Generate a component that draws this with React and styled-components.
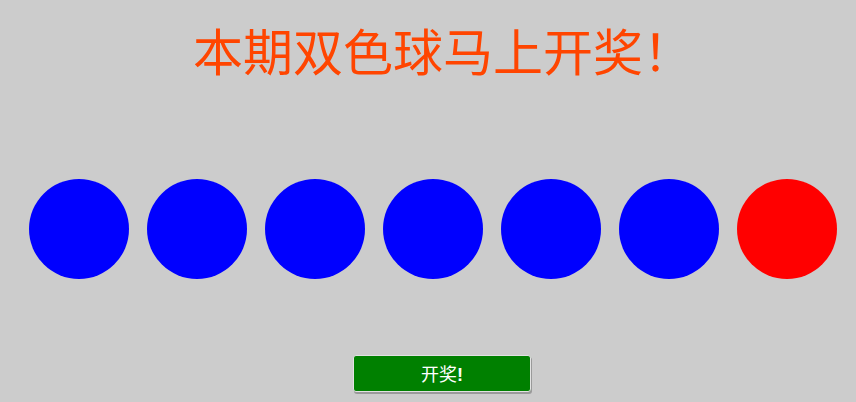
import React from "react";
import styled, { createGlobalStyle } from "styled-components";

const GlobalStyle = createGlobalStyle`
    html, body {
        margin: 0;
        padding: 0;
        background: #cccccc;
        overflow: hidden;
    }
    body {
        font-family: "Liberation Serif", "Noto Sans CJK SC", serif;
    }
`;

const Page = styled.div`
    width: 856px;
    height: 402px;
    display: flex;
    flex-direction: column;
`;

const Title = styled.h1`
    margin: 0;
    padding: 18px 0 0 30px;
    text-align: center;
    font-family: "Noto Sans CJK SC", serif;
    font-weight: 400;
    font-size: 50px;
    line-height: 62px;
    color: #ff4500;
`;

const BallRow = styled.div`
    display: flex;
    gap: 18px;
    padding-left: 29px;
    margin-top: 99px;
`;

const Ball = styled.div`
    width: 100px;
    height: 100px;
    border-radius: 50%;
    background: ${(p) => (p.red ? "#ff0000" : "#0000ff")};
`;

const ButtonRow = styled.div`
    display: flex;
    padding-left: 353px;
    margin-top: 76px;
`;

const DrawBtn = styled.button`
    width: 178px;
    height: 37px;
    padding: 0;
    background: #008000;
    color: #ffffff;
    font-family: "Noto Sans CJK SC", sans-serif;
    font-size: 18px;
    line-height: 1;
    border: 1px solid #e2e2e2;
    border-radius: 3px;
    box-shadow: 1px 2px 0 #9a9a9a;
    cursor: pointer;
`;

const Bang = styled.b`
    font-family: "Liberation Sans", sans-serif;
`;

export default function App() {
    const balls = [false, false, false, false, false, false, true];
    return (
        <>
            <GlobalStyle />
            <Page>
                <Title>本期双色球马上开奖！</Title>
                <BallRow>
                    {balls.map((red, i) => (
                        <Ball key={i} red={red} />
                    ))}
                </BallRow>
                <ButtonRow>
                    <DrawBtn>开奖<Bang>!</Bang></DrawBtn>
                </ButtonRow>
            </Page>
        </>
    );
}
